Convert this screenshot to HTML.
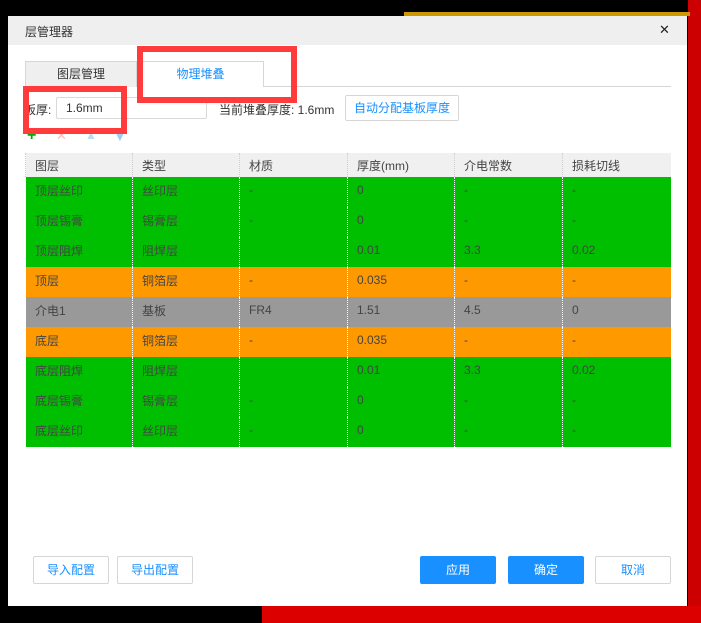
<!DOCTYPE html>
<html><head><meta charset="utf-8"><style>
*{margin:0;padding:0;box-sizing:border-box}
body{width:701px;height:623px;background:#000;position:relative;overflow:hidden;font-family:"Liberation Sans","Noto Sans CJK SC",sans-serif;font-size:12px;color:#333}
.abs{position:absolute}
.dlg{left:8px;top:16px;width:679px;height:590px;background:#fff}
.title{left:0;top:0;width:679px;height:29px;background:#efefef}
table{border-collapse:collapse;position:absolute;left:25px;top:153px;width:646px}
td{height:30px;padding-left:9px;border-left:1px dotted #fff;font-size:12px;padding-bottom:4px}
th{height:24px;text-align:left;font-weight:normal;padding-left:9px;background:#f0f0f0;border-left:1px dotted #ccc;color:#444}
tr.g td{background:#00bf00;color:#444}
tr.o td{background:#ff9900;color:#444}
tr.d td{background:#999;color:#444}
.btn{position:absolute;height:28px;border:1px solid #d6d6d6;border-radius:2px;color:#1890ff;text-align:center;line-height:26px;font-size:12px;background:#fff}
.pb{background:#1890ff;color:#fff;border-color:#1890ff}
.red{position:absolute;border:6px solid #ff3b3b}
</style></head><body>
<div class="abs" style="left:688px;top:0;width:13px;height:623px;background:#c00"></div>
<div class="abs" style="left:262px;top:606px;width:439px;height:17px;background:#d00"></div>
<div class="abs" style="left:404px;top:12px;width:286px;height:4px;background:#c90"></div>
<div class="abs dlg">
 <div class="abs title"><span class="abs" style="left:17px;top:7px;font-size:12px;color:#333">层管理器</span><span class="abs" style="left:651px;top:6px;font-size:13px;color:#222">✕</span></div>
</div>
<div class="abs" style="left:25px;top:61px;width:112px;height:26px;background:#efefef;border:1px solid #d6d6d6;border-bottom:none;text-align:center;line-height:24px;font-size:12px">图层管理</div>
<div class="abs" style="left:137px;top:61px;width:127px;height:26px;background:#fff;border:1px solid #d6d6d6;border-bottom:none;text-align:center;line-height:24px;font-size:12px;color:#1890ff">物理堆叠</div>
<div class="abs" style="left:264px;top:86px;width:407px;height:1px;background:#d6d6d6"></div>
<span class="abs" style="left:24px;top:101px">板厚:</span>
<div class="abs" style="left:56px;top:97px;width:151px;height:22px;border:1px solid #d9d9d9;border-radius:2px;padding-left:9px;line-height:20px;font-size:12px">1.6mm</div>
<span class="abs" style="left:219px;top:101px">当前堆叠厚度: 1.6mm</span>
<div class="btn" style="left:345px;top:95px;width:114px;height:26px;line-height:24px">自动分配基板厚度</div>
<span class="abs" style="left:27px;top:127px;color:#0a0;font-weight:bold;font-size:16px">+</span>
<span class="abs" style="left:56px;top:128px;color:#fbb;font-size:13px">✕</span>
<span class="abs" style="left:85px;top:128px;color:#bde;font-size:12px">▲</span>
<span class="abs" style="left:114px;top:130px;color:#9cf;font-size:12px">▼</span>
<div class="red" style="left:23px;top:86px;width:104px;height:48px"></div>
<div class="red" style="left:137px;top:46px;width:160px;height:57px"></div>
<table>
<tr><th style="width:107px">图层</th><th style="width:107px">类型</th><th style="width:108px">材质</th><th style="width:107px">厚度(mm)</th><th style="width:108px">介电常数</th><th>损耗切线</th></tr>
<tr class="g"><td>顶层丝印</td><td>丝印层</td><td>-</td><td>0</td><td>-</td><td>-</td></tr>
<tr class="g"><td>顶层锡膏</td><td>锡膏层</td><td>-</td><td>0</td><td>-</td><td>-</td></tr>
<tr class="g"><td>顶层阻焊</td><td>阻焊层</td><td></td><td>0.01</td><td>3.3</td><td>0.02</td></tr>
<tr class="o"><td>顶层</td><td>铜箔层</td><td>-</td><td>0.035</td><td>-</td><td>-</td></tr>
<tr class="d"><td>介电1</td><td>基板</td><td>FR4</td><td>1.51</td><td>4.5</td><td>0</td></tr>
<tr class="o"><td>底层</td><td>铜箔层</td><td>-</td><td>0.035</td><td>-</td><td>-</td></tr>
<tr class="g"><td>底层阻焊</td><td>阻焊层</td><td></td><td>0.01</td><td>3.3</td><td>0.02</td></tr>
<tr class="g"><td>底层锡膏</td><td>锡膏层</td><td>-</td><td>0</td><td>-</td><td>-</td></tr>
<tr class="g"><td>底层丝印</td><td>丝印层</td><td>-</td><td>0</td><td>-</td><td>-</td></tr>
</table>
<div class="btn" style="left:33px;top:556px;width:76px">导入配置</div>
<div class="btn" style="left:117px;top:556px;width:76px">导出配置</div>
<div class="btn pb" style="left:420px;top:556px;width:76px">应用</div>
<div class="btn pb" style="left:508px;top:556px;width:76px">确定</div>
<div class="btn" style="left:595px;top:556px;width:76px">取消</div>
</body></html>
